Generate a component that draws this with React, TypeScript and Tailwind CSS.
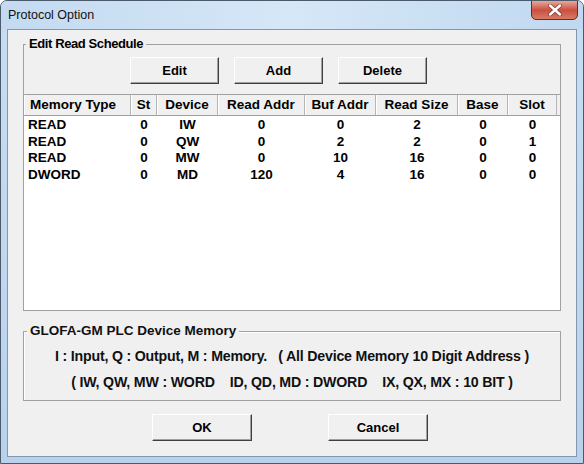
import React from 'react';

const font = { fontFamily: '"Liberation Sans", Arial, sans-serif' };

const columns = [
  { name: 'Memory Type', w: 'w-[107px]', left: true },
  { name: 'St', w: 'w-[26px]' },
  { name: 'Device', w: 'w-[61px]' },
  { name: 'Read Addr', w: 'w-[87px]' },
  { name: 'Buf Addr', w: 'w-[71px]' },
  { name: 'Read Size', w: 'w-[82px]' },
  { name: 'Base', w: 'w-[50px]' },
  { name: 'Slot', w: 'w-[49px]' },
];

const rows = [
  ['READ', '0', 'IW', '0', '0', '2', '0', '0'],
  ['READ', '0', 'QW', '0', '2', '2', '0', '1'],
  ['READ', '0', 'MW', '0', '10', '16', '0', '0'],
  ['DWORD', '0', 'MD', '120', '4', '16', '0', '0'],
];

const ClassicButton = ({ label, w }: { label: string; w: string }) => (
  <button
    className={`${w} h-[27px] bg-[#f0f0f0] border-t border-l border-t-white border-l-white border-b border-r border-b-[#404040] border-r-[#404040] shadow-[inset_-1px_-1px_0_#a0a0a0] text-[13px] font-bold text-black flex items-center justify-center`}
  >
    {label}
  </button>
);

const CloseIcon = () => (
  <svg width="16" height="12" viewBox="0 0 16 12">
    <path d="M3 1.5 L13 10.5 M13 1.5 L3 10.5" stroke="#4a1a14" strokeWidth="4" strokeLinecap="round" opacity="0.55" />
    <path d="M3 1.5 L13 10.5 M13 1.5 L3 10.5" stroke="#ffffff" strokeWidth="2.4" strokeLinecap="round" />
  </svg>
);

export default function App() {
  return (
    <div className="w-[584px] h-[464px] bg-white" style={font}>
      <div className="w-[584px] h-[464px] rounded-t-[7px] border border-[#4b5a6b] bg-gradient-to-b from-[#c7ddf3] via-[#c0d8f0] to-[#b9d2ec] flex flex-col overflow-hidden">
        {/* title bar */}
        <div className="h-[28px] flex items-start justify-between bg-gradient-to-r from-[#c3daf1] via-[#d6e7f7] to-[#c0d8f0]">
          <div className="pl-[7px] pt-[7px] text-[12.5px] text-[#111] leading-[14px]">Protocol Option</div>
          <div className="mr-[5px] mt-[-1px] w-[47px] h-[20px] rounded-b-[5px] border border-[#6b2a22] bg-gradient-to-b from-[#e9a897] via-[#c94f40] to-[#d87a63] flex items-center justify-center">
            <CloseIcon />
          </div>
        </div>

        {/* client area */}
        <div className="mx-[6px] h-[428px] border border-[#8497ad] bg-[#f0f0f0] flex flex-col px-[15px]">
          {/* Edit Read Schedule group */}
          <div className="relative mt-[14px] h-[50px] border-t border-x border-[#a0a0a0]">
            <div className="absolute -top-[9px] left-[2px] px-[3px] bg-[#f0f0f0] text-[13px] leading-[16px] font-bold text-black tracking-[-0.4px]">
              Edit Read Schedule
            </div>
            <div className="flex gap-[15px] pl-[106px] pt-[12px]">
              <ClassicButton label="Edit" w="w-[89px]" />
              <ClassicButton label="Add" w="w-[89px]" />
              <ClassicButton label="Delete" w="w-[89px]" />
            </div>
          </div>

          {/* list */}
          <div className="h-[217px] border border-[#a0a0a0] bg-white flex flex-col">
            <div className="flex h-[21px] bg-[#f0f0f0] border-b border-[#a0a0a0]">
              {columns.map((c) => (
                <div
                  key={c.name}
                  className={`${c.w} h-full flex items-center border-r border-[#b5b5b5] shadow-[inset_1px_0_0_#ffffff] text-[13.5px] font-bold text-black ${c.left ? 'pl-[6px]' : 'justify-center'}`}
                >
                  {c.name}
                </div>
              ))}
              <div className="flex-1" />
            </div>
            <div className="pt-[1px] flex flex-col">
              {rows.map((r, i) => (
                <div key={i} className="flex h-[16.5px] items-center text-[13.5px] font-bold text-black">
                  {r.map((v, j) => (
                    <div
                      key={j}
                      className={`${columns[j].w} leading-[16px] ${columns[j].left ? 'pl-[4px]' : 'text-center'}`}
                    >
                      {v}
                    </div>
                  ))}
                </div>
              ))}
            </div>
          </div>

          {/* GLOFA-GM group */}
          <div className="relative mt-[20px] h-[70px] border border-[#a0a0a0] shadow-[inset_1px_1px_0_#ffffff]">
            <div className="absolute -top-[9px] left-[3px] px-[3px] bg-[#f0f0f0] text-[13.5px] leading-[16px] font-bold text-[#111]">
              GLOFA-GM PLC Device Memory
            </div>
            <div className="flex flex-col items-center pt-[14px] gap-[6px] text-[14.2px] leading-[20px] font-bold text-[#111] tracking-[-0.2px]">
              <div className="whitespace-pre">I : Input, Q : Output, M : Memory.   ( All Device Memory 10 Digit Address )</div>
              <div className="whitespace-pre">( IW, QW, MW : WORD    ID, QD, MD : DWORD    IX, QX, MX : 10 BIT )</div>
            </div>
          </div>

          {/* OK / Cancel */}
          <div className="flex mt-[13px] pl-[129px] gap-[76px]">
            <ClassicButton label="OK" w="w-[100px]" />
            <ClassicButton label="Cancel" w="w-[100px]" />
          </div>
        </div>
      </div>
    </div>
  );
}
